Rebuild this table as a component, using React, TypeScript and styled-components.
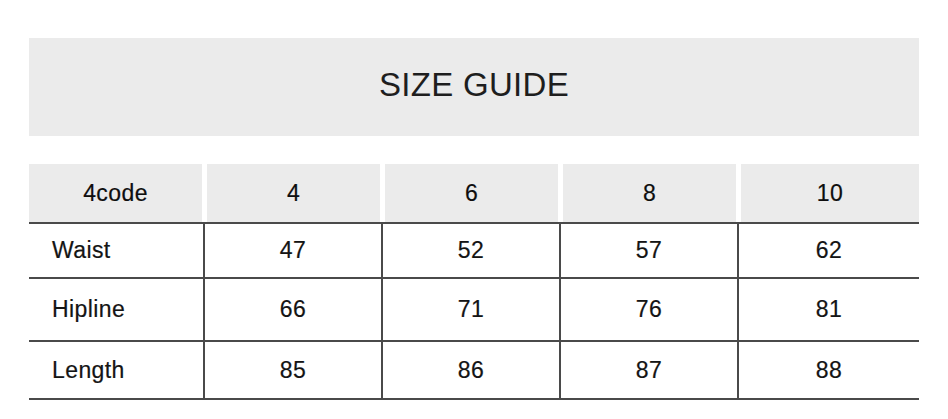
import styled, { createGlobalStyle } from "styled-components";

const GlobalStyle = createGlobalStyle`
  html, body {
    margin: 0;
    padding: 0;
    background: #ffffff;
  }
  body {
    font-family: "Liberation Sans", Arial, sans-serif;
    color: #111;
  }
`;

const Page = styled.div`
  width: 948px;
  height: 419px;
  box-sizing: border-box;
  padding: 38px 29px 0 29px;
  display: flex;
  flex-direction: column;
  gap: 28px;
`;

const Banner = styled.div`
  height: 98px;
  background: #ebebeb;
  display: flex;
  align-items: center;
  justify-content: center;
`;

const Title = styled.h1`
  margin: 0;
  font-weight: 400;
  font-size: 33px;
  letter-spacing: 0.3px;
  color: #1e1e1e;
  padding-bottom: 4px;
`;

const Table = styled.div`
  display: flex;
  flex-direction: column;
`;

const HeaderRow = styled.div`
  display: grid;
  grid-template-columns: 173px 173px 173px 173px 1fr;
  column-gap: 5px;
  height: 58px;
  border-bottom: 2px solid #4a4a4a;
`;

const HeaderCell = styled.div`
  background: #ebebeb;
  display: flex;
  align-items: center;
  justify-content: center;
  font-size: 23px;
  letter-spacing: 0.4px;
  color: #0e0e0e;
  -webkit-text-stroke: 0.2px #0e0e0e;
`;

const Row = styled.div<{ $h: number }>`
  display: grid;
  grid-template-columns: 174px 178px 178px 178px 1fr;
  height: ${(p) => p.$h}px;
  border-bottom: 2px solid #4a4a4a;
`;

const Cell = styled.div<{ $label?: boolean }>`
  display: flex;
  align-items: center;
  justify-content: ${(p) => (p.$label ? "flex-start" : "center")};
  padding-left: ${(p) => (p.$label ? "23px" : "0")};
  border-left: ${(p) => (p.$label ? "none" : "2px solid #4a4a4a")};
  font-size: 23px;
  letter-spacing: 0.4px;
  color: #141414;
  -webkit-text-stroke: 0.2px #141414;
`;

const sizes = ["4", "6", "8", "10"];

const rows = [
  { label: "Waist", values: ["47", "52", "57", "62"], h: 53 },
  { label: "Hipline", values: ["66", "71", "76", "81"], h: 61 },
  { label: "Length", values: ["85", "86", "87", "88"], h: 56 },
];

export default function App() {
  return (
    <>
      <GlobalStyle />
      <Page>
        <Banner>
          <Title>SIZE GUIDE</Title>
        </Banner>
        <Table>
          <HeaderRow>
            <HeaderCell>4code</HeaderCell>
            {sizes.map((s) => (
              <HeaderCell key={s}>{s}</HeaderCell>
            ))}
          </HeaderRow>
          {rows.map((r) => (
            <Row key={r.label} $h={r.h}>
              <Cell $label>{r.label}</Cell>
              {r.values.map((v, i) => (
                <Cell key={i}>{v}</Cell>
              ))}
            </Row>
          ))}
        </Table>
      </Page>
    </>
  );
}
